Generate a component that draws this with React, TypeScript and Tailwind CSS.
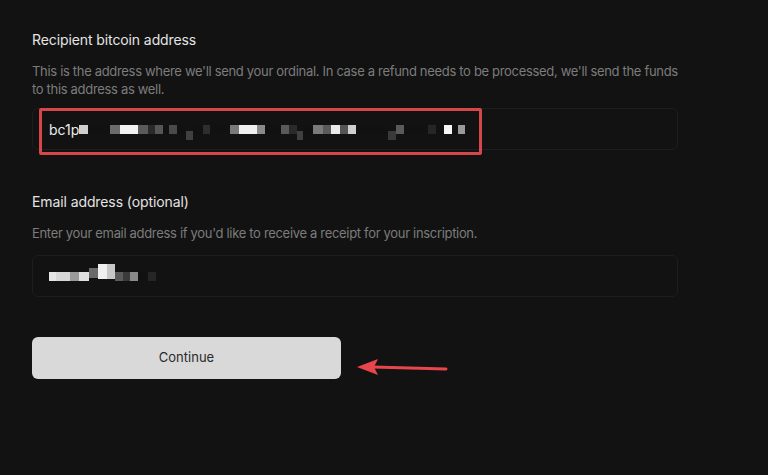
import React from 'react';

// pixelated (blurred) characters of the redacted values
const addressBlocks: { w: number; c: string; dy?: number }[] = [
  { w: 9, c: '#cfcfcf' },
  { w: 22, c: '#111111' },
  { w: 10, c: '#6b6b6b' },
  { w: 18, c: '#f2f2f2' },
  { w: 10, c: '#5a5a5a' },
  { w: 7, c: '#2a2a2a' },
  { w: 8, c: '#555555' },
  { w: 6, c: '#111111' },
  { w: 8, c: '#4a4a4a' },
  { w: 9, c: '#111111' },
  { w: 7, c: '#404040', dy: 6 },
  { w: 10, c: '#111111' },
  { w: 7, c: '#2e2e2e' },
  { w: 20, c: '#111111' },
  { w: 9, c: '#7a7a7a' },
  { w: 18, c: '#f0f0f0' },
  { w: 8, c: '#8a8a8a' },
  { w: 16, c: '#111111' },
  { w: 8, c: '#5a5a5a' },
  { w: 8, c: '#2a2a2a' },
  { w: 6, c: '#404040', dy: 6 },
  { w: 10, c: '#111111' },
  { w: 10, c: '#7a7a7a' },
  { w: 8, c: '#5a5a5a' },
  { w: 9, c: '#eaeaea' },
  { w: 8, c: '#555555' },
  { w: 8, c: '#cfcfcf' },
  { w: 32, c: '#111111' },
  { w: 8, c: '#3a3a3a', dy: 6 },
  { w: 8, c: '#5a5a5a' },
  { w: 24, c: '#111111' },
  { w: 8, c: '#262626' },
  { w: 8, c: '#111111' },
  { w: 8, c: '#f6f6f6' },
  { w: 6, c: '#111111' },
  { w: 7, c: '#9a9a9a' },
];

const emailBlocks: { w: number; c: string; h?: number; dy?: number }[] = [
  { w: 7, c: '#e6e6e6' },
  { w: 14, c: '#d8d8d8' },
  { w: 9, c: '#9a9a9a' },
  { w: 10, c: '#e0e0e0' },
  { w: 9, c: '#6a6a6a', h: 10, dy: -3 },
  { w: 9, c: '#f0f0f0', h: 15, dy: -5 },
  { w: 8, c: '#c8c8c8', h: 15, dy: -5 },
  { w: 8, c: '#5a5a5a' },
  { w: 7, c: '#3a3a3a' },
  { w: 8, c: '#8a8a8a' },
  { w: 10, c: '#111111' },
  { w: 8, c: '#262626' },
];

const Blocks = ({ items }: { items: { w: number; c: string; h?: number; dy?: number }[] }) => (
  <span className="flex items-center">
    {items.map((b, i) => (
      <span
        key={i}
        className="block"
        style={{ width: b.w, height: b.h ?? 9, background: b.c, transform: `translateY(${b.dy ?? 0}px)` }}
      />
    ))}
  </span>
);

export default function App() {
  return (
    <div
      className="w-[768px] h-[475px] bg-[#121212] overflow-hidden"
      style={{ fontFamily: 'Inter, "Liberation Sans", sans-serif' }}
    >
      <div className="w-[646px] ml-8 pt-[30px] flex flex-col">
        {/* recipient address */}
        <div className="text-[14px] leading-5 text-[#e4e4e4] tracking-[-0.1px]">Recipient bitcoin address</div>
        <p className="mt-3 text-[13px] leading-[18px] text-[#7c7c7c] tracking-[-0.32px]">
          This is the address where we'll send your ordinal. In case a refund needs to be processed, we'll send the funds
          to this address as well.
        </p>
        <div className="relative mt-[10px] h-[42px] rounded-[6px] border border-[#1e1e1e] bg-[#121212] flex items-center pl-4">
          <span className="text-[14px] text-[#ececec]">bc1p</span>
          <Blocks items={addressBlocks} />
          {/* highlight box drawn over the field */}
          <div className="absolute left-[6px] top-[-1px] w-[443px] h-[47px] border-[3px] border-[#d6474b] rounded-[2px] pointer-events-none" />
        </div>

        {/* email */}
        <div className="mt-[42px] text-[14px] leading-5 text-[#e4e4e4] tracking-[-0.1px]">Email address (optional)</div>
        <p className="mt-3 text-[13px] leading-[18px] text-[#7c7c7c] tracking-[-0.32px]">
          Enter your email address if you'd like to receive a receipt for your inscription.
        </p>
        <div className="mt-[13px] h-[42px] rounded-[6px] border border-[#1e1e1e] bg-[#121212] flex items-center pl-4">
          <Blocks items={emailBlocks} />
        </div>

        {/* continue */}
        <div className="mt-[39px] flex items-center">
          <button className="w-[309px] h-[42px] rounded-[6px] bg-[#d9d9d9] text-[13px] text-[#2a2a2a]">
            Continue
          </button>
          <svg width="92" height="24" viewBox="0 0 92 24" className="ml-[16px] mt-[20px]">
            <line x1="16" y1="11" x2="89" y2="13" stroke="#e8464c" strokeWidth="3" strokeLinecap="round" />
            <polygon points="0,11 21,3 17,11 21,19" fill="#e8464c" />
          </svg>
        </div>
      </div>
    </div>
  );
}
